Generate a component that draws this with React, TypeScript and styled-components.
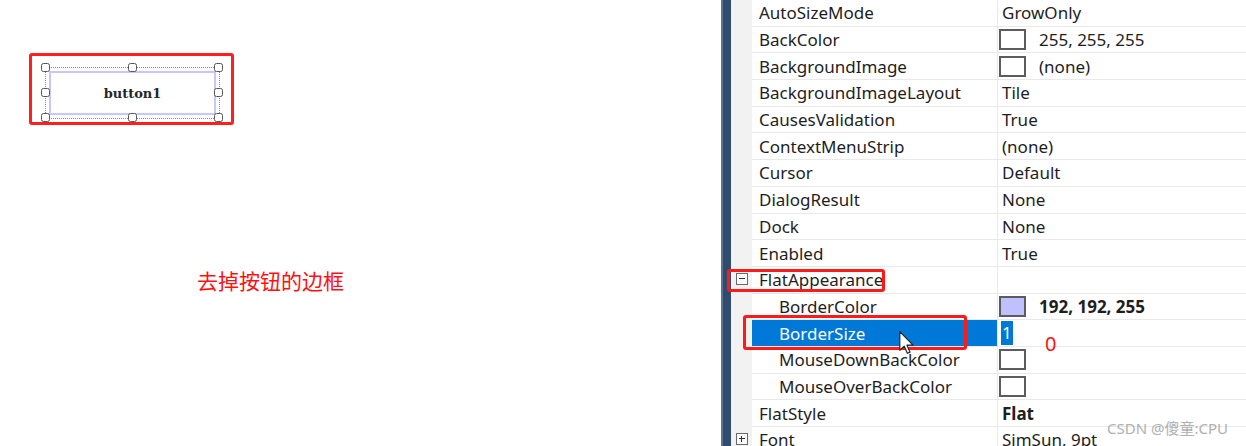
import React from "react";
import styled, { createGlobalStyle } from "styled-components";

const GlobalStyle = createGlobalStyle`
  html, body { margin: 0; padding: 0; background: #fff; }
  body { font-family: "Noto Sans", "Noto Sans CJK SC", sans-serif; }
`;

const Page = styled.div`
  position: relative;
  display: flex;
  width: 1246px;
  height: 446px;
  overflow: hidden;
  background: #fff;
`;

const DesignPane = styled.div`
  width: 721px;
  flex: none;
  box-sizing: border-box;
  display: flex;
  flex-direction: column;
  align-items: flex-start;
  padding: 53px 0 0 29px;
`;

const AnnotFrame = styled.div`
  display: flex;
  align-items: flex-start;
  box-sizing: border-box;
  width: 205px;
  height: 72px;
  border: 3px solid #ff1f1f;
  border-radius: 3px;
  padding: 11px 0 0 13px;
`;

const Selection = styled.div`
  position: relative;
  box-sizing: border-box;
  width: 175px;
  height: 52px;
  border: 1px dotted #8c8c8c;
  padding: 3px;
  display: flex;
`;

const FormButton = styled.div`
  flex: 1;
  display: flex;
  align-items: center;
  justify-content: center;
  border: 2px solid #c6c8fb;
  background: #fff;
  font-family: "DejaVu Serif", "Liberation Serif", serif;
  font-size: 13px;
  font-weight: bold;
  color: #262626;
`;

const Handle = styled.span<{ $x: number; $y: number }>`
  position: absolute;
  box-sizing: border-box;
  width: 9px;
  height: 9px;
  border: 1.5px solid #555;
  border-radius: 2.5px;
  background: #fff;
  left: calc(${(p) => p.$x}% - 5px);
  top: calc(${(p) => p.$y}% - 5px);
`;

const Caption = styled.div`
  margin: 143px 0 0 168px;
  color: #ff1010;
  font-family: "Noto Sans CJK SC", sans-serif;
  font-size: 21px;
  line-height: 24px;
`;

const PropertyPane = styled.div`
  flex: 1;
  display: flex;
  min-width: 0;
`;

const SideBar = styled.div`
  width: 10px;
  flex: none;
  box-sizing: border-box;
  background: #2f4b6e;
  border-left: 2px solid #5a7393;
`;

const GridBody = styled.div`
  flex: 1;
  display: flex;
  flex-direction: column;
  background: #fff;
`;

const Row = styled.div`
  position: relative;
  flex: none;
  display: grid;
  grid-template-columns: 21px 245px 1fr;
  height: 26.7px;
`;

const MarginCell = styled.div`
  background: #f2f2f2;
  display: flex;
  align-items: center;
  justify-content: center;
`;

const NameCell = styled.div<{ $sub?: boolean; $selected?: boolean }>`
  display: flex;
  align-items: center;
  box-sizing: border-box;
  padding-left: ${(p) => (p.$sub ? 27 : 7)}px;
  border-bottom: 1px solid #e9e9e9;
  background: ${(p) => (p.$selected ? "#0078d7" : "#fff")};
  color: ${(p) => (p.$selected ? "#fff" : "#1e1e1e")};
  font-size: 17px;
  white-space: nowrap;
  overflow: hidden;
`;

const ValueCell = styled.div<{ $bold?: boolean }>`
  display: flex;
  align-items: center;
  gap: 13px;
  box-sizing: border-box;
  padding-left: 4px;
  border-left: 1px solid #e9e9e9;
  border-bottom: 1px solid #e9e9e9;
  color: #1e1e1e;
  font-size: 17px;
  font-weight: ${(p) => (p.$bold ? 700 : 400)};
  white-space: nowrap;
`;

const Swatch = styled.span<{ $color: string }>`
  flex: none;
  box-sizing: border-box;
  width: 27px;
  height: 21px;
  margin-left: -3px;
  border: 2px solid #5c5c5c;
  background: ${(p) => p.$color};
`;

const EditSelection = styled.span`
  background: #0078d7;
  color: #fff;
  padding: 0 1px;
  line-height: 24px;
  margin-left: -1px;
`;

const Expander = styled.span<{ $plus?: boolean }>`
  position: relative;
  box-sizing: border-box;
  width: 12px;
  height: 12px;
  margin-top: -3px;
  border: 1px solid #6a6a6a;
  background: #fafafa;
  &::before {
    content: "";
    position: absolute;
    left: 2px;
    right: 2px;
    top: 4px;
    height: 1.5px;
    background: #333;
  }
  &::after {
    content: "";
    display: ${(p) => (p.$plus ? "block" : "none")};
    position: absolute;
    top: 2px;
    bottom: 2px;
    left: 4px;
    width: 1.5px;
    background: #333;
  }
`;

const RedMark = styled.div<{ $l: number; $t: number; $w: number; $h: number }>`
  position: absolute;
  z-index: 3;
  box-sizing: border-box;
  left: ${(p) => p.$l}px;
  top: ${(p) => p.$t}px;
  width: ${(p) => p.$w}px;
  height: ${(p) => p.$h}px;
  border: 3px solid #ff1a1a;
  border-radius: 3px;
  pointer-events: none;
`;

const ZeroNote = styled.span`
  position: absolute;
  z-index: 3;
  left: 314px;
  top: 12px;
  color: #ff1010;
  font-family: "Noto Sans", sans-serif;
  font-size: 20px;
  line-height: 24px;
`;

const CursorIcon = styled.svg`
  position: absolute;
  z-index: 4;
  left: 168px;
  top: 11px;
`;

const Watermark = styled.div`
  position: absolute;
  left: 1107px;
  top: 419px;
  color: #b0b0b0;
  font-family: "Noto Sans", "Noto Sans CJK SC", sans-serif;
  font-size: 15px;
  line-height: 18px;
  white-space: nowrap;
`;

type Prop = {
  name: string;
  value?: string;
  swatch?: string;
  sub?: boolean;
  bold?: boolean;
  expander?: "minus" | "plus";
  selected?: boolean;
  edit?: string;
  mark?: "flat" | "size";
};

const props: Prop[] = [
  { name: "AutoSizeMode", value: "GrowOnly" },
  { name: "BackColor", swatch: "#fff", value: "255, 255, 255" },
  { name: "BackgroundImage", swatch: "#fff", value: "(none)" },
  { name: "BackgroundImageLayout", value: "Tile" },
  { name: "CausesValidation", value: "True" },
  { name: "ContextMenuStrip", value: "(none)" },
  { name: "Cursor", value: "Default" },
  { name: "DialogResult", value: "None" },
  { name: "Dock", value: "None" },
  { name: "Enabled", value: "True" },
  { name: "FlatAppearance", expander: "minus", mark: "flat" },
  { name: "BorderColor", sub: true, swatch: "#c0c0ff", value: "192, 192, 255", bold: true },
  { name: "BorderSize", sub: true, selected: true, edit: "1", mark: "size" },
  { name: "MouseDownBackColor", sub: true, swatch: "#fff" },
  { name: "MouseOverBackColor", sub: true, swatch: "#fff" },
  { name: "FlatStyle", value: "Flat", bold: true },
  { name: "Font", expander: "plus", value: "SimSun, 9pt" },
];

const handles: [number, number][] = [
  [0, 0], [50, 0], [100, 0],
  [0, 50], [100, 50],
  [0, 100], [50, 100], [100, 100],
];

export default function App() {
  return (
    <>
      <GlobalStyle />
      <Page>
        <DesignPane>
          <AnnotFrame>
            <Selection>
              <FormButton>button1</FormButton>
              {handles.map(([x, y]) => (
                <Handle key={`${x}-${y}`} $x={x} $y={y} />
              ))}
            </Selection>
          </AnnotFrame>
          <Caption>去掉按钮的边框</Caption>
        </DesignPane>
        <PropertyPane>
          <SideBar />
          <GridBody>
            {props.map((p) => (
              <Row key={p.name}>
                <MarginCell>
                  {p.expander && <Expander $plus={p.expander === "plus"} />}
                </MarginCell>
                <NameCell $sub={p.sub} $selected={p.selected}>
                  {p.name}
                </NameCell>
                <ValueCell $bold={p.bold}>
                  {p.swatch && <Swatch $color={p.swatch} />}
                  {p.value && <span>{p.value}</span>}
                  {p.edit && <EditSelection>{p.edit}</EditSelection>}
                </ValueCell>
                {p.mark === "flat" && <RedMark $l={-4} $t={2} $w={158} $h={23} />}
                {p.mark === "size" && (
                  <>
                    <RedMark $l={12} $t={-5} $w={224} $h={35} />
                    <CursorIcon width="16" height="24" viewBox="0 0 13 20">
                      <path
                        d="M0.5 0.5 L0.5 16 L4.2 12.6 L6.8 18.6 L9 17.6 L6.5 11.8 L11.5 11.8 Z"
                        fill="#fff"
                        stroke="#222"
                        strokeWidth="1"
                        strokeLinejoin="round"
                      />
                    </CursorIcon>
                    <ZeroNote>0</ZeroNote>
                  </>
                )}
              </Row>
            ))}
          </GridBody>
        </PropertyPane>
        <Watermark>CSDN @傻童:CPU</Watermark>
      </Page>
    </>
  );
}
